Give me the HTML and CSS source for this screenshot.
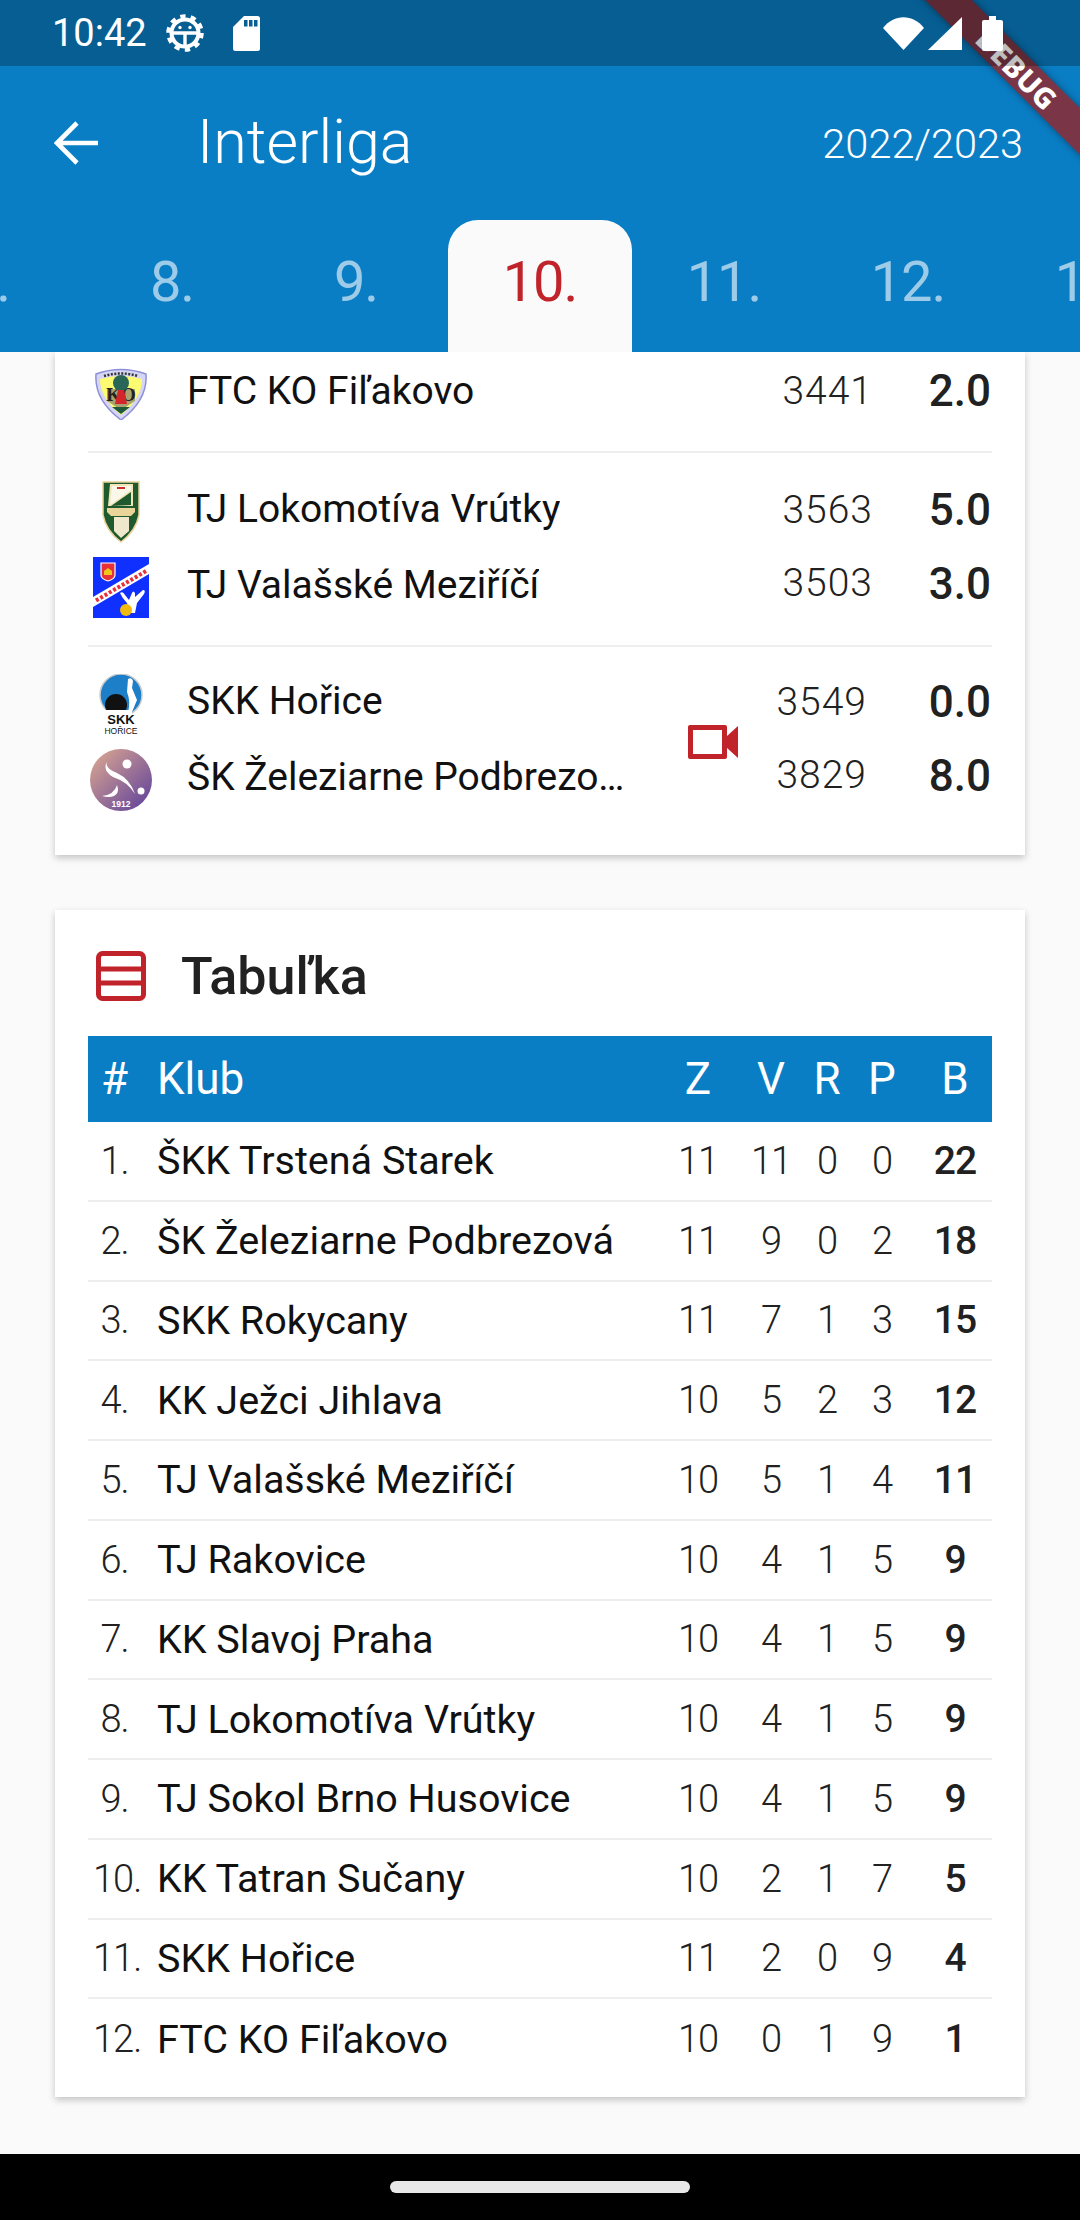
FILE: index.html
```html
<!DOCTYPE html>
<html lang="en">
<head>
  <meta charset="UTF-8" />
  <meta name="viewport" content="width=device-width, initial-scale=1.0" />
  <title>Interliga</title>
  <link rel="stylesheet" href="styles.css">
</head>
<body>
  <header class="top">
    <div class="statusbar">
      <div class="status-left">
        <span class="clock">10:42</span>
        <svg class="gear" width="38" height="38" viewBox="0 0 38 38">
          <circle cx="19" cy="19" r="16.5" fill="none" stroke="#fff" stroke-width="4.5" stroke-dasharray="5.2 5.17"/>
          <circle cx="19" cy="19" r="13.5" fill="none" stroke="#fff" stroke-width="4"/>
          <path d="M6 19H32M19 19V32" stroke="#fff" stroke-width="3.4" fill="none"/>
          <circle cx="14" cy="13.5" r="1.7" fill="#fff"/>
          <circle cx="24" cy="13.5" r="1.7" fill="#fff"/>
        </svg>
        <svg class="sdcard" width="27" height="35" viewBox="0 0 27 35">
          <path d="M11 0H24.500A2.500 2.500 0 0 1 27 2.500V32.500A2.500 2.500 0 0 1 24.500 35H2.500A2.500 2.500 0 0 1 0 32.500V11Z" fill="#fff"/>
          <path d="M11 4h3.500v6.500H11zM16 4h3.500v6.500H16zM21 4h3.500v6.500H21z" fill="#085f94"/>
        </svg>
      </div>
      <div class="status-right">
        <svg width="41" height="33" viewBox="0 0 41 33"><path d="M0 11C11-3.500 30-3.500 41 11L20.500 33Z" fill="#fff"/></svg>
        <svg class="signal" width="34" height="33" viewBox="0 0 34 33"><path d="M34 0V33H0Z" fill="#fff"/></svg>
        <svg class="battery" width="21" height="35" viewBox="0 0 21 35"><path d="M7 0H14V4H19A2 2 0 0 1 21 6V33A2 2 0 0 1 19 35H2A2 2 0 0 1 0 33V6A2 2 0 0 1 2 4H7Z" fill="#fff"/></svg>
      </div>
    </div>
    <div class="toolbar">
      <svg class="back" width="44" height="44" viewBox="0 0 44 44"><path d="M44 22H4M23 2L3 22L23 42" fill="none" stroke="#fff" stroke-width="4.600"/></svg>
      <h1 class="title">Interliga</h1>
      <span class="season">2022/2023</span>
    </div>
    <nav class="tabs">
      <span class="tab">7.</span>
      <span class="tab">8.</span>
      <span class="tab">9.</span>
      <span class="tab active">10.</span>
      <span class="tab">11.</span>
      <span class="tab">12.</span>
      <span class="tab">13.</span>
    </nav>
  </header>
  <div class="banner">DEBUG</div>

  <main class="content">
    <section class="card results">
      <div class="match first">
        <div class="teams">
          <div class="team">
            <span class="logo-box">
              <svg width="54" height="52" viewBox="0 0 54 52">
                <path d="M2 6Q27-3 52 6Q54 32 27 52Q0 32 2 6Z" fill="#d5d5f5" stroke="#8f8fd8" stroke-width="1.500"/>
                <path d="M6 11Q27 5 48 11Q48 30 27 47Q6 30 6 11Z" fill="#fdfb70"/>
                <path d="M10 8Q27 3 44 8" fill="none" stroke="#333" stroke-width="2.500" stroke-dasharray="2 1.500"/>
                <path d="M13 21H41V33L27 42L13 33Z" fill="#a7a26e"/>
                <text x="27" y="33" class="logo-ko">KO</text>
                <circle cx="27" cy="15" r="8" fill="#2a6658"/>
                <path d="M24 22H30L33 36H21Z" fill="#d3262b"/>
                <path d="M18 39H36L27 46Z" fill="#1e5a3a"/>
              </svg>
            </span>
            <span class="name">FTC KO Fiľakovo</span>
          </div>
        </div>
        <div class="scores"><span>3441</span></div>
        <div class="points"><span>2.0</span></div>
      </div>
      <div class="match">
        <div class="teams">
          <div class="team">
            <span class="logo-box">
              <svg width="38" height="62" viewBox="0 0 38 62">
                <path d="M1 1H37V34Q34 50 19 61Q4 50 1 34Z" fill="#1f5a2e" stroke="#e9d49a" stroke-width="1.500"/>
                <path d="M8 3H31V25H6Z" fill="#f2e6b8"/>
                <path d="M10 5H29V9L8 24Z" fill="#fbf8ea"/>
                <path d="M9 25L29 11V24Z" fill="#1f5a2e"/>
                <path d="M5 27H33V31L29 35H9L5 31Z" fill="#e9d49a"/>
                <path d="M12 36H27V50L19 57L12 50Z" fill="#f0e8cc"/>
                <path d="M15 6h8v2h-8z" fill="#c83228"/>
              </svg>
            </span>
            <span class="name">TJ Lokomotíva Vrútky</span>
          </div>
          <div class="team">
            <span class="logo-box">
              <svg width="56" height="61" viewBox="0 0 56 61">
                <rect width="56" height="61" fill="#1030ff"/>
                <path d="M0 40L56 7V17L0 50Z" fill="#fff"/>
                <path d="M3 43.500L54 13.500" fill="none" stroke="#e8303a" stroke-width="4" stroke-dasharray="3 2"/>
                <path d="M8 6H22V18Q22 22 15 24Q8 22 8 18Z" fill="#e8303a" stroke="#fff" stroke-width="1.200"/>
                <path d="M11 14L15 11L19 14V18H11Z" fill="#f2c31a"/>
                <path d="M27 36Q30 34 32 38L36 43L39 36Q40 33 42 36V40L50 33Q53 33 51 37L44 46L42 56H36L34 46Q29 41 27 36Z" fill="#fff"/>
                <circle cx="33" cy="53" r="6" fill="#f2b90f"/>
              </svg>
            </span>
            <span class="name">TJ Valašské Meziříčí</span>
          </div>
        </div>
        <div class="scores"><span>3563</span><span>3503</span></div>
        <div class="points"><span>5.0</span><span>3.0</span></div>
      </div>
      <div class="match">
        <div class="teams">
          <div class="team">
            <span class="logo-box">
              <svg width="46" height="60" viewBox="0 0 46 60">
                <circle cx="23" cy="21" r="21" fill="#1c7fc8" stroke="#ccc" stroke-width="1.500"/>
                <circle cx="18" cy="31" r="11" fill="#111"/>
                <path d="M2 36H34V43H2Z" fill="#fff"/>
                <path d="M30 5Q34 3 35 7L34 14L39 26L34 38H30Q33 28 29 18Z" fill="#fff"/>
                <text x="23" y="50" class="logo-skk">SKK</text>
                <text x="23" y="60" class="logo-horice">HOŘICE</text>
              </svg>
            </span>
            <span class="name">SKK Hořice</span>
          </div>
          <div class="team">
            <span class="logo-box">
              <svg width="62" height="62" viewBox="0 0 62 62">
                <defs>
                  <linearGradient id="zp" x1="0" y1="0" x2="1" y2="1">
                    <stop offset="0.100" stop-color="#d3a091"/>
                    <stop offset="1" stop-color="#5a3d9c"/>
                  </linearGradient>
                </defs>
                <circle cx="31" cy="31" r="31" fill="url(#zp)"/>
                <circle cx="37" cy="15" r="4.500" fill="#fff"/>
                <circle cx="51" cy="42" r="3.500" fill="#fff"/>
                <path d="M17 12Q14 19 27 24Q40 30 45 45Q38 33 23 28Q12 22 17 12Z" fill="#fff"/>
                <path d="M12 47Q24 46 27 36Q30 44 24 47Q19 49 12 47Z" fill="#fff"/>
                <text x="31" y="58" class="logo-year">1912</text>
              </svg>
            </span>
            <span class="name">ŠK Železiarne Podbrezová</span>
          </div>
        </div>
        <svg class="video" width="50" height="34" viewBox="0 0 50 34">
          <path d="M2 0H37A2 2 0 0 1 39 2V11L50 1V33L39 23V32A2 2 0 0 1 37 34H2A2 2 0 0 1 0 32V2A2 2 0 0 1 2 0ZM5 5V29H34V5Z" fill="#c1232a" fill-rule="evenodd"/>
        </svg>
        <div class="scores"><span>3549</span><span>3829</span></div>
        <div class="points"><span>0.0</span><span>8.0</span></div>
      </div>
    </section>

    <section class="card standings">
      <div class="card-head">
        <svg width="50" height="50" viewBox="0 0 50 50">
          <rect x="2.500" y="2.500" width="45" height="45" rx="4" fill="none" stroke="#c1232a" stroke-width="5"/>
          <path d="M2 18H48M2 32H48" stroke="#c1232a" stroke-width="5"/>
        </svg>
        <h2>Tabuľka</h2>
      </div>
      <div class="row head">
        <span class="pos">#</span><span class="club">Klub</span><span>Z</span><span>V</span><span>R</span><span>P</span><span>B</span>
      </div>
      <div class="row"><span class="pos">1.</span><span class="club">ŠKK Trstená Starek</span><span>11</span><span>11</span><span>0</span><span>0</span><b>22</b></div>
      <div class="row"><span class="pos">2.</span><span class="club">ŠK Železiarne Podbrezová</span><span>11</span><span>9</span><span>0</span><span>2</span><b>18</b></div>
      <div class="row"><span class="pos">3.</span><span class="club">SKK Rokycany</span><span>11</span><span>7</span><span>1</span><span>3</span><b>15</b></div>
      <div class="row"><span class="pos">4.</span><span class="club">KK Ježci Jihlava</span><span>10</span><span>5</span><span>2</span><span>3</span><b>12</b></div>
      <div class="row"><span class="pos">5.</span><span class="club">TJ Valašské Meziříčí</span><span>10</span><span>5</span><span>1</span><span>4</span><b>11</b></div>
      <div class="row"><span class="pos">6.</span><span class="club">TJ Rakovice</span><span>10</span><span>4</span><span>1</span><span>5</span><b>9</b></div>
      <div class="row"><span class="pos">7.</span><span class="club">KK Slavoj Praha</span><span>10</span><span>4</span><span>1</span><span>5</span><b>9</b></div>
      <div class="row"><span class="pos">8.</span><span class="club">TJ Lokomotíva Vrútky</span><span>10</span><span>4</span><span>1</span><span>5</span><b>9</b></div>
      <div class="row"><span class="pos">9.</span><span class="club">TJ Sokol Brno Husovice</span><span>10</span><span>4</span><span>1</span><span>5</span><b>9</b></div>
      <div class="row"><span class="pos">10.</span><span class="club">KK Tatran Sučany</span><span>10</span><span>2</span><span>1</span><span>7</span><b>5</b></div>
      <div class="row"><span class="pos">11.</span><span class="club">SKK Hořice</span><span>11</span><span>2</span><span>0</span><span>9</span><b>4</b></div>
      <div class="row last"><span class="pos">12.</span><span class="club">FTC KO Fiľakovo</span><span>10</span><span>0</span><span>1</span><span>9</span><b>1</b></div>
    </section>
  </main>

  <footer class="navbar"><div class="home-pill"></div></footer>
</body>
</html>
```

FILE: styles.css
```css
* {
  box-sizing: border-box;
}
html, body {
  margin: 0;
  height: 2220px;
}
body {
  position: relative;
  display: flex;
  flex-direction: column;
  overflow: hidden;
  font-family: Roboto, "Noto Sans", sans-serif;
  background-color: #fafafa;
  color: #212121;
}

/* top area */
.top {
  flex: none;
  overflow: hidden;
  background-color: #0a7ec5;
}
.statusbar {
  position: relative;
  z-index: 3;
  display: flex;
  justify-content: space-between;
  align-items: center;
  height: 66px;
  padding: 0 77px 0 52px;
  background-color: rgba(0,0,0,0.25);
  color: #fff;
}
.status-left, .status-right {
  display: flex;
  align-items: center;
}
.clock {
  font-size: 38px;
  line-height: 66px;
}
.gear {
  margin-left: 19px;
}
.sdcard {
  margin-left: 29px;
}
.signal {
  margin-left: 4px;
}
.battery {
  margin-left: 20px;
}
.toolbar {
  display: flex;
  align-items: center;
  height: 154px;
  padding: 0 57px 0 54px;
  color: #fff;
}
.title {
  flex: 1;
  margin: 0 0 3px 99px;
  font-size: 61px;
  font-weight: 300;
}
.season {
  font-size: 41.5px;
  font-weight: 300;
}
.tabs {
  display: flex;
  height: 132px;
  margin-left: -104px;
}
.tab {
  flex: none;
  width: 184px;
  padding-top: 12px;
  text-align: center;
  font-size: 56px;
  letter-spacing: -1px;
  line-height: 100px;
  color: rgba(255,255,255,0.6);
}
.tab.active {
  background-color: #fafafa;
  border-radius: 30px 30px 0 0;
  color: #c1232a;
}

/* flutter debug ribbon */
.banner {
  position: absolute;
  z-index: 2;
  left: 867px;
  top: 52px;
  width: 300px;
  height: 33px;
  transform: rotate(45deg);
  background-color: rgba(176,20,10,0.68);
  box-shadow: 0 0 8px rgba(0,0,0,0.4);
  color: #fff;
  font-family: "Noto Sans", sans-serif;
  font-size: 29px;
  font-weight: 800;
  line-height: 33px;
  text-align: center;
}

/* content */
.content {
  flex: 1;
  overflow: hidden;
}
.card {
  margin: 0 55px;
  padding: 0 33px;
  background-color: #fff;
  box-shadow: 0 3px 7px rgba(0,0,0,0.22);
}
.match {
  display: flex;
  align-items: center;
  padding: 20px 1px 19px 0;
  border-top: 2px solid #eee;
}
.match.first {
  padding: 2px 1px 18px 0;
  border-top: 0;
}
.match:last-child {
  padding-top: 18px;
  padding-bottom: 37px;
}
.teams {
  flex: 1;
  min-width: 0;
}
.team {
  display: flex;
  align-items: center;
  height: 76px;
}
.logo-box {
  flex: none;
  display: flex;
  justify-content: center;
  width: 66px;
  margin-right: 33px;
}
.name {
  max-width: 445px;
  padding-bottom: 5px;
  overflow: hidden;
  white-space: nowrap;
  text-overflow: ellipsis;
  font-size: 39px;
  color: #111;
}
.video {
  flex: none;
  margin-right: 38px;
}
.video + .scores {
  margin-right: 6px;
}
.scores {
  display: flex;
  flex-direction: column;
  align-items: flex-end;
  padding-bottom: 5px;
  font-size: 39px;
  font-weight: 300;
  letter-spacing: 1px;
  line-height: 73px;
}
.points {
  display: flex;
  flex-direction: column;
  align-items: flex-end;
  width: 118px;
  padding-bottom: 5px;
  font-size: 44px;
  font-weight: 500;
  line-height: 74px;
}

.standings {
  margin-top: 55px;
  padding-top: 41px;
  padding-bottom: 18px;
}
.card-head {
  display: flex;
  align-items: center;
  height: 50px;
  margin-bottom: 35px;
  padding-left: 8px;
}
.card-head h2 {
  margin: 0 0 0 35px;
  font-size: 52px;
  font-weight: 500;
}
.row {
  display: grid;
  grid-template-columns: 48px 526px 72px 74px 38px 72px 74px;
  align-items: center;
  height: 79.75px;
  border-bottom: 2px solid #eee;
  font-size: 38px;
  font-weight: 300;
  letter-spacing: -1px;
  text-align: center;
}
.row.last {
  border-bottom: 0;
}
.row b {
  font-size: 39px;
  font-weight: 500;
}
.row .pos {
  padding-left: 5px;
  white-space: nowrap;
}
.row .club {
  padding-left: 21px;
  font-size: 39.5px;
  font-weight: 400;
  letter-spacing: 0;
  text-align: left;
  color: #111;
}
.row.head {
  height: 86px;
  border-bottom: 0;
  background-color: #0a7ec5;
  color: #fff;
  font-size: 44px;
  font-weight: 400;
  letter-spacing: 0;
}
.row.head .club {
  font-size: 44px;
  color: #fff;
}
.logo-ko {
  font-family: "Liberation Serif", serif;
  font-size: 19px;
  font-weight: 700;
  text-anchor: middle;
  fill: #222;
}
.logo-skk {
  font-family: "Liberation Sans", sans-serif;
  font-size: 13px;
  font-weight: 700;
  text-anchor: middle;
  fill: #111;
}
.logo-horice {
  font-family: "Liberation Sans", sans-serif;
  font-size: 8.5px;
  text-anchor: middle;
  fill: #111;
}
.logo-year {
  font-family: "Liberation Sans", sans-serif;
  font-size: 8.5px;
  font-weight: 700;
  text-anchor: middle;
  fill: #fff;
}

.navbar {
  flex: none;
  display: flex;
  align-items: flex-start;
  justify-content: center;
  height: 66px;
  padding-top: 27px;
  background-color: #000;
}
.home-pill {
  width: 300px;
  height: 12px;
  border-radius: 6px;
  background-color: #e8e8e8;
}
```
